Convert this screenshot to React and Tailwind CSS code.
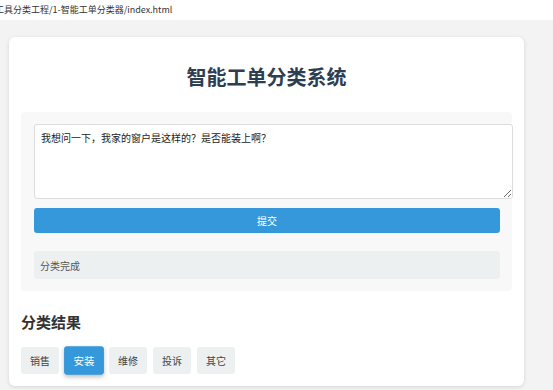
import React, { useState } from "react";

const categories = ["销售", "安装", "维修", "投诉", "其它"];

const App = () => {
  const [text, setText] = useState("我想问一下，我家的窗户是这样的？是否能装上啊？");
  const [active, setActive] = useState("安装");

  return (
    <div
      className="w-[553px] h-[390px] overflow-hidden bg-[#f3f3f3]"
      style={{ fontFamily: '"Noto Sans CJK SC", "Noto Sans", sans-serif' }}
    >
      {/* address bar remnant */}
      <div className="h-[20px] bg-white flex items-center overflow-hidden">
        <span className="-ml-[5px] whitespace-nowrap text-[9px] text-[#333]">
          工具分类工程/1-智能工单分类器/index.html
        </span>
      </div>

      {/* Card */}
      <div className="ml-[9px] mt-[17px] w-[515px] h-[349px] bg-white rounded-md shadow-[0_1px_4px_rgba(0,0,0,0.12)] px-[12px] pt-[22px]">
        <h1 className="text-center text-[20px] leading-[36px] font-bold text-[#2c3e50]">
          智能工单分类系统
        </h1>

        {/* Input panel */}
        <div className="mt-[17px] bg-[#f8f8f8] rounded-[4px] py-[12px] pl-[13px] pr-0">
          <textarea
            className="block w-[479px] h-[75px] bg-white border border-[#dcdcdc] rounded-[3px] px-[6px] py-[6px] text-[10px] leading-[14px] text-[#222] outline-none resize-y"
            value={text}
            onChange={(e) => setText(e.target.value)}
          />
          <button className="mt-[9px] block w-[466px] h-[25px] bg-[#3498db] rounded-[3px] text-white text-[10px]">
            提交
          </button>
          <div className="mt-[18px] w-[466px] h-[28px] bg-[#ecf0f1] rounded-[3px] flex items-center px-[6px] text-[10px] text-[#555]">
            分类完成
          </div>
        </div>

        {/* Result */}
        <h2 className="mt-[20px] text-[15px] leading-[22px] font-bold text-[#333]">分类结果</h2>
        <div className="mt-[14px] flex gap-[6px] items-center">
          {categories.map((c) => (
            <button
              key={c}
              onClick={() => setActive(c)}
              className={
                c === active
                  ? "h-[27px] px-[9px] rounded-[3px] text-[10px] bg-[#3498db] text-white scale-105 shadow-[0_2px_4px_rgba(0,0,0,0.25)]"
                  : "h-[27px] px-[9px] rounded-[3px] text-[10px] bg-[#ecf0f1] text-[#444]"
              }
            >
              {c}
            </button>
          ))}
        </div>
      </div>
    </div>
  );
};

export default App;
